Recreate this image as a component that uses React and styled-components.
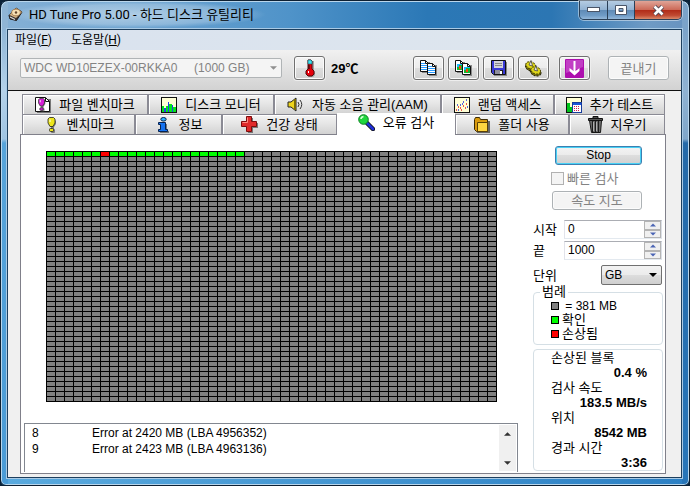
import React, { useState } from 'react';
import styled, { createGlobalStyle } from 'styled-components';

const GlobalStyle = createGlobalStyle`
  * {
    box-sizing: border-box;
  }

  body {
    margin: 0;
    background: #0b2238;
    color: #000;
    font-family: "Liberation Sans", "Noto Sans CJK KR", sans-serif;
    font-size: 12px;
    line-height: 15px;
  }

  button, input, select, textarea {
    margin: 0;
    padding: 0;
    font: inherit;
    color: inherit;
  }
`;

/* window frame */
const Frame = styled.div`
  display: flex;
  flex-direction: column;
  min-height: 100vh;
  padding: 0 7px 7px 6px;
  border: 1px solid #0d2033;
  border-radius: 8px 8px 6px 6px;
  background:
    linear-gradient(180deg, #8fb5d6 28px, #b4d2ea 90px, #9fc4e2 138px, #57a4da 142px, #4a9bd6) left / 7px 100% no-repeat,
    linear-gradient(180deg, #7ba3c9 28px, #8fb2d2 90px, #7fa6ca 138px, #2469a8 142px, #2876b9) right / 7px 100% no-repeat,
    linear-gradient(90deg, #86b1d6, #4f93c9 42%, #2b78b6 62%, #2c76b3 80%, #6f9bc5 94%, #6792bf) top / 100% 30px no-repeat,
    linear-gradient(90deg, #5aaade, #2c80c4);
  box-shadow: inset 0 0 0 1px #b9d6ec;
`;

const TitleBar = styled.header`
  display: flex;
  align-items: flex-start;
  justify-content: space-between;
  height: 28px;
  padding: 0 0 0 1px;
`;

const Title = styled.h1`
  display: flex;
  align-items: center;
  gap: 6px;
  margin: 0;
  padding: 0 12px 0 0;
  height: 27px;
  font-family: Roboto, "Noto Sans CJK KR", sans-serif;
  font-size: 13px;
  font-weight: 400;
  background: radial-gradient(closest-side, rgba(255, 255, 255, 0.45), rgba(255, 255, 255, 0.25) 75%, transparent);
`;

const WindowButtons = styled.div`
  display: flex;
  height: 19px;
  border: 1px solid #2a3f57;
  border-top: 0;
  border-radius: 0 0 5px 5px;
  overflow: hidden;
  box-shadow: 0 0 0 1px rgba(255, 255, 255, 0.45);
`;

const WindowButton = styled.button`
  display: flex;
  align-items: center;
  justify-content: center;
  width: ${(props) => (props.$close ? 47 : 27)}px;
  border: 0;
  border-left: ${(props) => (props.$first ? '0' : '1px solid #2a3f57')};
  background: ${(props) =>
    props.$close
      ? 'linear-gradient(180deg, #e0a497, #cc6a58 48%, #b02a17 50%, #c04a32 80%, #d98a6a)'
      : 'linear-gradient(180deg, #b5cce2, #92b2d2 48%, #5f8ab5 50%, #6f9bc6 80%, #94b8da)'};
`;

/* client area */
const Client = styled.div`
  display: flex;
  flex-direction: column;
  flex: 1;
  border: 1px solid #1d3f5e;
  background: #f0f0f0;
  box-shadow: 0 0 0 1px #a9cae5;
`;

const MenuBar = styled.nav`
  display: flex;
  gap: 19px;
  height: 20px;
  padding: 0 7px;
  background: linear-gradient(90deg, #d9e2ee, #dfe7ee);
`;

const MenuButton = styled.button`
  border: 0;
  background: none;
  font-family: Roboto, "Noto Sans CJK KR", sans-serif;
  font-size: 12px;
  line-height: 20px;
`;

const Toolbar = styled.div`
  display: flex;
  align-items: center;
  height: 41px;
  padding: 0 12px 4px;
  gap: 4px;
  border-bottom: 1px solid #111;
  background: linear-gradient(180deg, #f1f1f1, #d2d2d2);
`;

const SelectBox = styled.div`
  display: grid;
  align-items: center;
  width: ${(props) => props.$width}px;

  > * {
    grid-area: 1 / 1;
  }

  svg {
    justify-self: end;
    margin-right: 5px;
    pointer-events: none;
  }
`;

const Select = styled.select`
  appearance: none;
  width: 100%;
  height: 20px;
  padding: 0 3px;
  border: 1px solid #707070;
  border-radius: 2px;
  background: linear-gradient(180deg, #f2f2f2, #ebebeb 50%, #dddddd 51%, #cfcfcf);
  outline: none;

  &:disabled {
    border-color: #b0b4b6;
    background: #f4f4f4;
    color: #838383;
    opacity: 1;
  }
`;

const Temperature = styled.strong`
  flex: 1;
  padding: 0 2px;
  font-size: 13px;
`;

const ToolGroup = styled.div`
  display: flex;
  gap: 4px;
  margin-left: ${(props) => props.$before || 0}px;
  margin-right: ${(props) => props.$after || 0}px;
`;

const ToolButton = styled.button`
  display: flex;
  align-items: center;
  justify-content: center;
  width: 31px;
  height: 24px;
  border: 1px solid #707070;
  border-radius: 3px;
  background: linear-gradient(180deg, #f4f4f4, #ececec 48%, #dddddd 50%, #d2d2d2);
  box-shadow: inset 0 0 0 1px #fbfbfb, 0 0 0 1px #eeeeee;
`;

const PushButton = styled.button`
  width: ${(props) => props.$width}px;
  height: ${(props) => props.$height || 19}px;
  border: 1px solid ${(props) => (props.$default ? '#3c7fb1' : '#707070')};
  border-radius: 3px;
  background: linear-gradient(180deg, #f3f3f3, #ebebeb 48%, #dddddd 50%, #d0d0d0);
  box-shadow: inset 0 0 0 1px ${(props) => (props.$default ? '#48d1f5' : '#fcfcfc')};
  font-size: ${(props) => (props.$default ? 12 : 13)}px;
  line-height: 15px;

  &:disabled {
    border-color: #adb2b5;
    background: #f4f4f4;
    color: #838383;
  }
`;

/* tabs */
const Body = styled.main`
  display: flex;
  flex-direction: column;
  flex: 1;
  padding: 3px 15px 3px 12px;
`;

const TabRow = styled.div`
  display: grid;
  grid-template-columns: ${(props) => props.$columns};
  margin: 0 1px 0 2px;
`;

const Tab = styled.button`
  display: flex;
  align-items: center;
  justify-content: center;
  gap: 8px;
  height: 20px;
  border: solid #8a8a94;
  border-width: 1px 1px 0 1px;
  background: linear-gradient(180deg, #f4f4f4, #e4e4e4 50%, #d2d2d2);
  box-shadow: inset 1px 1px 0 #fff;
  font-size: 13px;
  line-height: 15px;
  white-space: nowrap;

  svg {
    flex: none;
  }

  &[aria-selected='true'] {
    border-color: #fff;
    background: #fff;
    height: 22px;
    margin: -1px 0 -1px;
    padding-bottom: 4px;
    z-index: 1;
  }
`;

const Page = styled.section`
  display: flex;
  flex: 1;
  gap: 15px;
  padding: 11px 2px 1px 3px;
  border: 1px solid #80808a;
  background: #fff;
`;

const ScanColumn = styled.div`
  display: flex;
  flex-direction: column;
  flex: 1;
  align-items: center;
  justify-content: space-between;
  padding-top: 5px;
`;

const BlockMap = styled.div`
  display: grid;
  grid-template-columns: repeat(50, 8px);
  grid-auto-rows: 4px;
  gap: 1px;
  padding: 1px;
  background: #000;
`;

const Block = styled.i`
  background: ${(props) => props.$color};
`;

const Log = styled.div`
  display: flex;
  align-items: stretch;
  justify-content: space-between;
  width: 100%;
  height: 49px;
  border: 1px solid #828790;
  border-bottom: 0;
`;

const LogTable = styled.table`
  align-self: flex-start;
  border-collapse: collapse;
  margin: 1px 0 0 7px;

  td {
    padding: 0;
    height: 16px;
    line-height: 16px;
  }

  td:first-child {
    width: 60px;
  }
`;

const ScrollBar = styled.div`
  display: flex;
  flex-direction: column;
  justify-content: space-between;
  width: 17px;
  margin: 1px;
  background: #f0f0f0;
`;

const ScrollButton = styled.button`
  display: flex;
  align-items: center;
  justify-content: center;
  height: 17px;
  border: 0;
  background: none;
`;

/* right column */
const SideColumn = styled.aside`
  display: flex;
  flex-direction: column;
  flex: 0 0 130px;
`;

const Actions = styled.div`
  display: flex;
  flex-direction: column;
  gap: 5px;
  padding: 0 21px 0 18px;
  align-items: flex-end;
`;

const CheckLabel = styled.label`
  display: flex;
  align-items: center;
  align-self: flex-start;
  gap: 3px;
  height: 15px;
  margin-top: 1px;
  color: #838383;
  font-size: 13px;
`;

const Checkbox = styled.input`
  appearance: none;
  width: 13px;
  height: 13px;
  border: 1px solid #b1b1b1;
  background: #f4f4f4;

  &:checked {
    background: #4a5f97;
  }
`;

const Fields = styled.div`
  display: flex;
  flex-direction: column;
  gap: 2px;
  padding-top: 10px;
`;

const Field = styled.div`
  display: flex;
  align-items: center;
  justify-content: space-between;
  padding-right: 1px;
  margin-top: ${(props) => props.$space || 0}px;

  > label {
    font-size: 13px;
  }
`;

const Spinner = styled.div`
  display: flex;
  width: 98px;
  height: 19px;
  border: 1px solid #abadb3;
  border-color: #abadb3 #dbdfe6 #e3e9ef #e2e3ea;
`;

const SpinnerInput = styled.input`
  flex: 1;
  min-width: 0;
  padding: 0 3px;
  border: 0;
  outline: none;
`;

const SpinnerButtons = styled.div`
  display: grid;
  grid-template-rows: 1fr 1fr;
  width: 17px;
`;

const SpinnerButton = styled.button`
  display: flex;
  align-items: center;
  justify-content: center;
  border: 1px solid #b4b4b4;
  background: #f0f0f0;
`;

const Group = styled.fieldset`
  min-width: 0;
  margin: ${(props) => (props.$plain ? '4px' : '0')} 0 0;
  padding: 0 15px ${(props) => (props.$plain ? 0 : 3)}px 17px;
  border: 1px solid #d5dfe5;
  border-radius: 4px;

  legend {
    padding: 0 2px;
    margin-left: -11px;
    font-size: 13px;
    line-height: 14px;
  }
`;

const LegendList = styled.ul`
  margin: 0;
  padding: 0;
  list-style: none;
`;

const LegendItem = styled.li`
  display: flex;
  align-items: center;
  gap: 3px;
  font-size: 13px;
  line-height: 14px;
  white-space: pre;

  span {
    font-size: ${(props) => (props.$latin ? 12 : 13)}px;
  }
`;

const Swatch = styled.i`
  width: 8px;
  height: 8px;
  border: 1px solid #000;
  background: ${(props) => props.$color};
`;

const Stats = styled.dl`
  margin: 0;
  font-size: 13px;

  dd {
    margin: 0;
    font-weight: 700;
    text-align: right;
  }
`;

const Arrow = ({ up, color = '#000', width = 7 }) => (
  <svg width={width} height={4} viewBox="0 0 8 4" aria-hidden="true">
    <path d={up ? 'M0 4L4 0L8 4Z' : 'M0 0L4 4L8 0Z'} fill={color} />
  </svg>
);

const DiskIcon = () => (
  <svg width="15" height="15" viewBox="0 0 15 15" aria-hidden="true">
    <path d="M1 8.500L8 1L14 5L8.500 13.500L2 12Z" fill="#3d3430" stroke="#211b18" />
    <path d="M1.500 8L8 1L14 5L8 11Z" fill="#d8b98c" />
    <ellipse cx="8" cy="5.500" rx="4.300" ry="3.300" fill="#f7dfb4" stroke="#94673a" strokeWidth="0.700" />
    <circle cx="8" cy="5.500" r="1.200" fill="#60452c" />
    <path d="M2 10L7 12.500" stroke="#ddd" strokeWidth="1.200" />
  </svg>
);

const ThermoIcon = () => (
  <svg width="12" height="18" viewBox="0 0 12 18" aria-hidden="true">
    <path d="M5 2h5v10l1 2v2l-2 2H5L3 15V13l2-2Z" fill="#777" opacity="0.600" />
    <path d="M4 1h3l1 1v8l2 2v3l-2 2H4l-2-2v-3l2-2Z" fill="#e5000c" stroke="#55090c" />
    <path d="M4 1h3l1 1v3H4Z" fill="#3fe0ee" stroke="#0c5560" strokeWidth="0.600" />
    <path d="M4 7h2M4 9h2" stroke="#111" />
    <rect x="4" y="12" width="1" height="2" fill="#fff" />
  </svg>
);

const Sheet = ({ x, y, children }) => (
  <g transform={`translate(${x} ${y})`}>
    <path d="M2 2h8v11H2Z" fill="#8a8a8a" />
    <path d="M0.500 0.500h5l3 3v8h-8Z" fill="#fff" stroke="#111" />
    <path d="M5.500 0.500v3h3" fill="none" stroke="#111" />
    {children}
  </g>
);

const CopyTextIcon = () => (
  <svg width="17" height="16" viewBox="0 0 17 16" aria-hidden="true">
    {[[0, 0], [7, 3]].map(([x, y]) => (
      <Sheet key={x} x={x} y={y}>
        <path d="M1 3h4v1H1ZM1 5h7v1H1ZM1 7h7v1H1ZM1 9h7v1H1Z" fill="#2a9bff" />
      </Sheet>
    ))}
  </svg>
);

const CopyImageIcon = () => (
  <svg width="17" height="16" viewBox="0 0 17 16" aria-hidden="true">
    {[[0, 0], [7, 3]].map(([x, y]) => (
      <Sheet key={x} x={x} y={y}>
        <rect x="2" y="4" width="6" height="6" fill="#10b92c" />
        <rect x="2" y="4" width="6" height="1" fill="#1bb5ff" />
        <rect x="2" y="4" width="2" height="3" fill="#1bb5ff" />
        <rect x="4" y="6" width="2" height="3" fill="#ff3b10" />
      </Sheet>
    ))}
  </svg>
);

const SaveIcon = () => (
  <svg width="16" height="16" viewBox="0 0 16 16" aria-hidden="true">
    <path d="M2 2h14v14H3Z" fill="#888" />
    <path d="M0.500 0.500h14v14h-12l-2-2Z" fill="#3a3ad6" stroke="#111" />
    <rect x="3" y="1" width="9" height="7" fill="#d2d2da" />
    <path d="M4 3.500h7M4 5.500h7" stroke="#888" />
    <rect x="3" y="10" width="9" height="4" fill="#222" />
    <rect x="4" y="10" width="5" height="4" fill="#8f8f9c" />
    <rect x="9" y="11" width="2" height="3" fill="#fff" />
  </svg>
);

const Gear = ({ x, y }) => (
  <g transform={`translate(${x} ${y})`}>
    <ellipse cx="6" cy="7" rx="5.500" ry="3.800" transform="rotate(20 6 6)" fill="#77700c" stroke="#26240a" strokeDasharray="2 1" />
    <ellipse cx="5.500" cy="5.500" rx="5" ry="3.500" transform="rotate(20 6 6)" fill="#ded61a" stroke="#4d4808" strokeDasharray="2 1" />
    <path d="M4 5L6 0.500L7.500 6Z" fill="#ececec" stroke="#444" strokeWidth="0.800" />
  </g>
);

const GearsIcon = () => (
  <svg width="17" height="17" viewBox="0 0 17 17" aria-hidden="true">
    <Gear x={0} y={0} />
    <Gear x={5} y={5} />
  </svg>
);

const DownIcon = () => (
  <svg width="19" height="19" viewBox="0 0 19 19" aria-hidden="true">
    <rect width="19" height="19" rx="1" fill="#ad0fae" />
    <path d="M1 1h17v7L1 14Z" fill="#c13fc4" />
    <path d="M8.500 2h2v10l4-3v3l-5 4.500l-5-4.500V9l4 3Z" fill="#fff" />
  </svg>
);

const Exclaim = ({ color }) => (
  <>
    <path d="M5 2h4l2 2v3L9 10v2H6v-2L4 7V3Z" fill="#555" opacity="0.700" />
    <rect x="6" y="12" width="4" height="4" rx="1" fill="#555" opacity="0.700" />
    <path d="M4.500 0.500h4l1.500 1.500v4L8 9.500H5L3 6V2Z" fill={color} stroke="#222" strokeWidth="0.800" />
    <rect x="4.500" y="11.500" width="4" height="3" rx="1" fill={color} stroke="#222" strokeWidth="0.800" />
    <path d="M5 2.500v2.500" stroke="#fff" />
  </>
);

const BenchIcon = () => (
  <svg width="16" height="16" viewBox="-2 0 16 16" aria-hidden="true">
    <Exclaim color="#ece51c" />
  </svg>
);

const FileBenchIcon = () => (
  <svg width="16" height="16" viewBox="0 0 16 16" aria-hidden="true">
    <path d="M2 2h14v14H2Z" fill="#777" />
    <path d="M0.500 0.500h10l4 4v10h-14Z" fill="#fff" stroke="#111" />
    <path d="M10.500 0.500v4h4" fill="none" stroke="#111" />
    <g transform="translate(1 1) scale(0.850)"><Exclaim color="#d620d6" /></g>
  </svg>
);

const MonitorIcon = () => (
  <svg width="16" height="16" viewBox="0 0 16 16" aria-hidden="true">
    <rect x="0.500" y="0.500" width="15" height="15" fill="#ffffd5" stroke="#111" />
    <path d="M1 15V9h2v6M5 15V9h2v6M8 15V7h3v8M12 15v-5h3v5" fill="#00e61b" />
    <path d="M3 15v-4h2v4M7 15V5h1v10M11 15V8h1v7" fill="#2740e8" />
  </svg>
);

const SpeakerIcon = () => (
  <svg width="17" height="15" viewBox="0 0 17 15" aria-hidden="true">
    <path d="M1 5h3l5-4v13l-5-4H1Z" fill="#efd51d" stroke="#222" />
    <path d="M8 2v11" stroke="#7b6b09" strokeWidth="2" />
    <path d="M11 5q2 2.500 0 5M13 3q3.500 4.500 0 9" fill="none" stroke="#333" />
  </svg>
);

const ScatterIcon = () => (
  <svg width="16" height="16" viewBox="0 0 16 16" aria-hidden="true">
    <rect x="0.500" y="0.500" width="15" height="15" fill="#ffffd5" stroke="#111" />
    <path d="M2 13h1M4 10h1M6 11h1M9 9h1M7 13h1M12 7h1M11 11h1" stroke="#e02020" strokeWidth="1.400" />
    <path d="M3 8h1M6 8h1M9 5h1M12 3h1M8 7h1M13 10h1M4 13h1" stroke="#2030e0" strokeWidth="1.400" />
  </svg>
);

const ExtraIcon = () => (
  <svg width="16" height="16" viewBox="0 0 16 16" aria-hidden="true">
    <rect x="0.500" y="0.500" width="15" height="15" fill="#ffffd5" stroke="#111" />
    <path d="M1 15V6h3v9M4 15v-5h2v5" fill="#00c41b" />
    <rect x="6.500" y="5.500" width="9" height="10" fill="#fff" stroke="#173c9c" />
    <path d="M7 7h8" stroke="#1c55d8" strokeWidth="2" />
    <path d="M8 9.500h6M8 11.500h6M8 13.500h6" stroke="#d01c50" strokeDasharray="1 1" />
  </svg>
);

const InfoIcon = () => (
  <svg width="16" height="16" viewBox="-3 0 16 16" aria-hidden="true">
    <path d="M3 7h6v7h2v2H2Z" fill="#777" />
    <path d="M0.500 5.500h7v7h2v2h-9v-2h2v-5h-2Z" fill="#1672f0" stroke="#06224f" />
    <ellipse cx="5.500" cy="2.300" rx="2.700" ry="1.800" fill="#2fb4ff" stroke="#06224f" />
  </svg>
);

const HealthIcon = () => (
  <svg width="17" height="17" viewBox="0 0 17 17" aria-hidden="true">
    <path d="M7 2h5v5h5v5h-5v5H7Z" fill="#777" />
    <path d="M5.500 0.500h5v5h5v5h-5v5h-5v-5h-5v-5h5Z" fill="#e02a2a" stroke="#7d0c0c" />
    <path d="M6.500 6.500v-5M1.500 6.500h5" stroke="#ff8a80" />
  </svg>
);

const SearchIcon = () => (
  <svg width="17" height="17" viewBox="0 0 17 17" aria-hidden="true">
    <path d="M9 9l6 6" stroke="#111" strokeWidth="4.500" strokeLinecap="round" />
    <path d="M9 9l6 6" stroke="#1f2fd8" strokeWidth="2.800" strokeLinecap="round" />
    <circle cx="5.500" cy="5.500" r="4.800" fill="#1fd63d" stroke="#0b8020" />
    <path d="M3 5q0-2 2.500-2.500" stroke="#d5ffd5" strokeWidth="1.500" fill="none" />
  </svg>
);

const FolderIcon = () => (
  <svg width="16" height="16" viewBox="0 0 16 16" aria-hidden="true">
    <path d="M3 4h13v12H3Z" fill="#666" />
    <path d="M0.500 2.500l1-2h4l1 2h7v12h-11l-2-2Z" fill="#d99a0c" stroke="#3b2a04" />
    <path d="M3.500 5.500h10v9h-10Z" fill="#ffd640" stroke="#5b4006" />
  </svg>
);

const TrashIcon = () => (
  <svg width="15" height="17" viewBox="0 0 15 17" aria-hidden="true">
    <path d="M1.500 4.500h12l-1 12h-9Z" fill="#777" stroke="#151515" />
    <path d="M4.500 5v11M7.500 5v11M10.500 5v11" stroke="#1c1c1c" strokeWidth="1.300" />
    <path d="M5.500 6v9M8.500 6v9" stroke="#ccc" strokeWidth="0.700" />
    <path d="M0.500 2.500h14v2h-14ZM5 2V0.500h5V2" fill="#555" stroke="#111" />
  </svg>
);

const topTabs = [
  { name: '파일 벤치마크', Icon: FileBenchIcon },
  { name: '디스크 모니터', Icon: MonitorIcon },
  { name: '자동 소음 관리(AAM)', Icon: SpeakerIcon },
  { name: '랜덤 액세스', Icon: ScatterIcon },
  { name: '추가 테스트', Icon: ExtraIcon },
];

const bottomTabs = [
  { name: '벤치마크', Icon: BenchIcon },
  { name: '정보', Icon: InfoIcon },
  { name: '건강 상태', Icon: HealthIcon },
  { name: '오류 검사', Icon: SearchIcon },
  { name: '폴더 사용', Icon: FolderIcon },
  { name: '지우기', Icon: TrashIcon },
];

const errors = [
  { no: 8, text: 'Error at 2420 MB (LBA 4956352)' },
  { no: 9, text: 'Error at 2423 MB (LBA 4963136)' },
];

const stats = [
  ['손상된 블록', '0.4 %'],
  ['검사 속도', '183.5 MB/s'],
  ['위치', '8542 MB'],
  ['경과 시간', '3:36'],
];

const BLOCKS = 2500;
const SCANNED = 22;
const DAMAGED = [6];

// block color by scan state
const blockColor = (i) => {
  if (DAMAGED.includes(i)) return '#ff0000';
  return i < SCANNED ? '#00ff00' : '#808080';
};

function Tabs({ items, columns, active, onSelect }) {
  return (
    <TabRow role="tablist" $columns={columns}>
      {items.map(({ name, Icon }) => (
        <Tab key={name} role="tab" aria-selected={active === name} onClick={() => onSelect(name)}>
          <Icon />
          {name}
        </Tab>
      ))}
    </TabRow>
  );
}

function NumberField({ id, label, value, onChange }) {
  const step = (n) => onChange(String(Math.max(0, Number(value) + n)));
  return (
    <Field>
      <label htmlFor={id}>{label}</label>
      <Spinner>
        <SpinnerInput id={id} value={value} onChange={(e) => onChange(e.target.value)} />
        <SpinnerButtons>
          <SpinnerButton aria-label={`${label} +`} onClick={() => step(1)}>
            <Arrow up color="#4a64b4" width={6} />
          </SpinnerButton>
          <SpinnerButton aria-label={`${label} -`} onClick={() => step(-1)}>
            <Arrow color="#4a64b4" width={6} />
          </SpinnerButton>
        </SpinnerButtons>
      </Spinner>
    </Field>
  );
}

function App() {
  const [tab, setTab] = useState('오류 검사');
  const [start, setStart] = useState('0');
  const [end, setEnd] = useState('1000');
  const [unit, setUnit] = useState('GB');

  return (
    <Frame>
      <GlobalStyle />
      <TitleBar>
        <Title>
          <DiskIcon />
          HD Tune Pro 5.00 - 하드 디스크 유틸리티
        </Title>
        <WindowButtons>
          <WindowButton $first aria-label="최소화">
            <svg width="13" height="6" viewBox="0 0 13 6">
              <rect x="0.500" y="0.500" width="12" height="4" fill="#fff" stroke="#4a5568" />
            </svg>
          </WindowButton>
          <WindowButton aria-label="최대화">
            <svg width="12" height="10" viewBox="0 0 12 10">
              <path d="M0.500 0.500h11v9h-11ZM4 3.500v3h4v-3Z" fill="#fff" fillRule="evenodd" stroke="#4a5568" />
            </svg>
          </WindowButton>
          <WindowButton $close aria-label="닫기">
            <svg width="13" height="11" viewBox="0 0 13 11">
              <path d="M2.500 1.500l8 8M10.500 1.500l-8 8" stroke="#4c4350" strokeWidth="4.400" />
              <path d="M2.500 1.500l8 8M10.500 1.500l-8 8" stroke="#fff" strokeWidth="2.600" />
            </svg>
          </WindowButton>
        </WindowButtons>
      </TitleBar>

      <Client>
        <MenuBar>
          <MenuButton>파일(<u>F</u>)</MenuButton>
          <MenuButton>도움말(<u>H</u>)</MenuButton>
        </MenuBar>

        <Toolbar>
          <SelectBox $width={262}>
            <Select disabled aria-label="드라이브">
              <option>{'WDC WD10EZEX-00RKKA0\u00a0\u00a0\u00a0\u00a0\u00a0(1000 GB)'}</option>
            </Select>
            <Arrow color="#8f8f8f" />
          </SelectBox>
          <ToolGroup $before={8}>
            <ToolButton aria-label="온도"><ThermoIcon /></ToolButton>
          </ToolGroup>
          <Temperature>29℃</Temperature>
          <ToolGroup $after={6}>
            <ToolButton aria-label="텍스트 복사"><CopyTextIcon /></ToolButton>
            <ToolButton aria-label="화면 복사"><CopyImageIcon /></ToolButton>
            <ToolButton aria-label="저장"><SaveIcon /></ToolButton>
            <ToolButton aria-label="설정"><GearsIcon /></ToolButton>
          </ToolGroup>
          <ToolGroup $after={14}>
            <ToolButton aria-label="최소화"><DownIcon /></ToolButton>
          </ToolGroup>
          <PushButton $width={61} $height={24} disabled>끝내기</PushButton>
        </Toolbar>

        <Body>
          <Tabs items={topTabs} columns="126fr 126fr 167fr 113fr 111fr" active={tab} onSelect={setTab} />
          <Tabs items={bottomTabs} columns="113fr 87fr 115fr 118fr 114fr 96fr" active={tab} onSelect={setTab} />
          <Page role="tabpanel">
            <ScanColumn>
              <BlockMap>
                {Array.from({ length: BLOCKS }, (_, i) => (
                  <Block key={i} $color={blockColor(i)} />
                ))}
              </BlockMap>
              <Log>
                <LogTable>
                  <tbody>
                    {errors.map((row) => (
                      <tr key={row.no}>
                        <td>{row.no}</td>
                        <td>{row.text}</td>
                      </tr>
                    ))}
                  </tbody>
                </LogTable>
                <ScrollBar>
                  <ScrollButton aria-label="위로"><Arrow up color="#333" /></ScrollButton>
                  <ScrollButton aria-label="아래로"><Arrow color="#333" /></ScrollButton>
                </ScrollBar>
              </Log>
            </ScanColumn>

            <SideColumn>
              <Actions>
                <PushButton $width={87} $default>Stop</PushButton>
                <CheckLabel>
                  <Checkbox type="checkbox" disabled />
                  빠른 검사
                </CheckLabel>
                <PushButton $width={90} disabled>속도 지도</PushButton>
              </Actions>

              <Fields>
                <NumberField id="start" label="시작" value={start} onChange={setStart} />
                <NumberField id="end" label="끝" value={end} onChange={setEnd} />
                <Field $space={3}>
                  <label htmlFor="unit">단위</label>
                  <SelectBox $width={61}>
                    <Select id="unit" value={unit} onChange={(e) => setUnit(e.target.value)}>
                      <option>GB</option>
                      <option>MB</option>
                    </Select>
                    <Arrow width={8} />
                  </SelectBox>
                </Field>
              </Fields>

              <Group>
                <legend>범례</legend>
                <LegendList>
                  <LegendItem $latin><Swatch $color="#808080" /><span> = 381 MB</span></LegendItem>
                  <LegendItem><Swatch $color="#00ff00" /><span>확인</span></LegendItem>
                  <LegendItem><Swatch $color="#ff0000" /><span>손상됨</span></LegendItem>
                </LegendList>
              </Group>

              <Group $plain>
                <Stats>
                  {stats.map(([label, value]) => (
                    <React.Fragment key={label}>
                      <dt>{label}</dt>
                      <dd>{value}</dd>
                    </React.Fragment>
                  ))}
                </Stats>
              </Group>
            </SideColumn>
          </Page>
        </Body>
      </Client>
    </Frame>
  );
}

export default App;
